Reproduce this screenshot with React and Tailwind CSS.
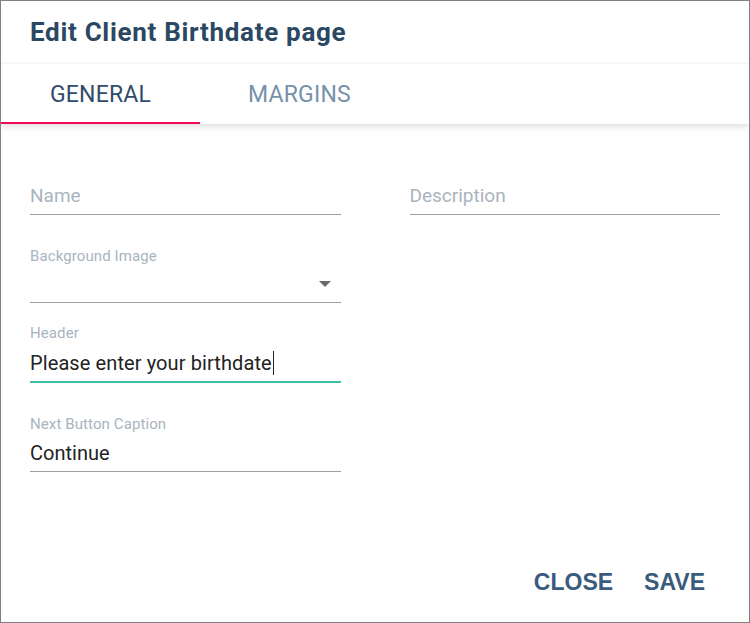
import React from "react";

const roboto = { fontFamily: "Roboto, 'Noto Sans', sans-serif" };

export default function App() {
  return (
    <div
      className="w-[750px] h-[623px] border border-[#808080] bg-white flex flex-col overflow-hidden"
      style={roboto}
    >
      <div className="h-[62px] px-[29px] flex items-center shrink-0">
        <h1 className="text-[26px] font-bold text-[#2b4862] leading-none tracking-[0.7px]">
          Edit Client Birthdate page
        </h1>
      </div>
      <div className="h-[61px] shrink-0 flex border-t border-[#f3f3f3] shadow-[0_3px_6px_rgba(0,0,0,0.12)] relative z-10 bg-white">
        <div className="w-[199px] flex flex-col">
          <div className="flex-1 flex items-center justify-center pt-[4px] text-[23px] text-[#2f4d6a] tracking-[0.2px]">
            GENERAL
          </div>
          <div className="h-[2px] bg-[#f0085b]" />
        </div>
        <div className="w-[199px] flex flex-col">
          <div className="flex-1 flex items-center justify-center pt-[4px] text-[23px] text-[#7791a9] tracking-[0.2px]">
            MARGINS
          </div>
          <div className="h-[2px]" />
        </div>
      </div>
      <div className="flex-1 flex flex-col px-[29px]">
        <div className="flex gap-[69px] pt-[55px]">
          <div className="w-[311px] flex flex-col">
            <div className="h-[36px] flex items-center border-b border-[#9e9e9e] text-[19px] text-[#a9b4be]">
              Name
            </div>
            <div className="mt-[32px] text-[15px] leading-[18px] text-[#a9b4be] tracking-[0.1px]">
              Background Image
            </div>
            <div className="h-[38px] flex items-center justify-end border-b border-[#9e9e9e] pr-[10px]">
              <svg width="12" height="6" viewBox="0 0 12 6">
                <path d="M0 0 L12 0 L6 6 Z" fill="#6b6b6b" />
              </svg>
            </div>
            <div className="mt-[21px] text-[15px] leading-[18px] text-[#a9b4be] tracking-[0.1px]">
              Header
            </div>
            <div className="h-[41px] pt-[3px] flex items-center border-b-2 border-[#3fbfaa] text-[20px] text-[#222] tracking-[0.1px]">
              Please enter your birthdate
              <span className="inline-block w-[1px] h-[24px] bg-[#222] ml-[1px]" />
            </div>
            <div className="mt-[32px] text-[15px] leading-[18px] text-[#a9b4be] tracking-[0.1px]">
              Next Button Caption
            </div>
            <div className="h-[39px] pt-[1px] flex items-center border-b border-[#9e9e9e] text-[20px] text-[#222]">
              Continue
            </div>
          </div>
          <div className="w-[311px] flex flex-col">
            <div className="h-[36px] flex items-center border-b border-[#9e9e9e] text-[19px] text-[#a9b4be]">
              Description
            </div>
          </div>
        </div>
        <div className="flex-1" />
        <div
          className="flex justify-end gap-[31px] pr-[15px] pb-[23px] text-[23px] font-bold text-[#3a5b7d]"
          style={{ fontFamily: "'Liberation Sans', Arial, sans-serif" }}
        >
          <span>CLOSE</span>
          <span>SAVE</span>
        </div>
      </div>
    </div>
  );
}
